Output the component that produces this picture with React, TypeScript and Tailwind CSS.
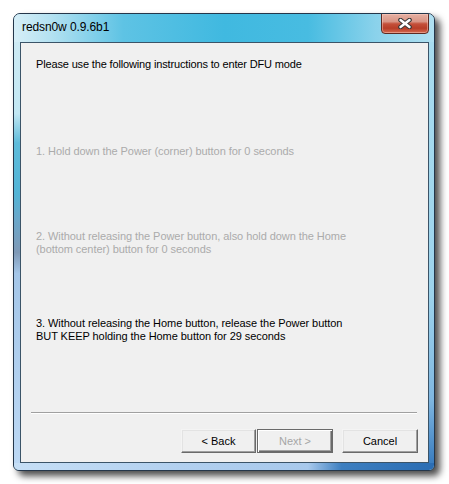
const font = { fontFamily: '"Liberation Sans", Arial, sans-serif' };

const CloseGlyph = () => (
  <svg width="14" height="11" viewBox="0 0 14 11">
    <path d="M2.5 2 L11.5 9 M11.5 2 L2.5 9" stroke="#3a3a3a" strokeWidth="4.6" strokeLinecap="round" fill="none" />
    <path d="M2.5 2 L11.5 9 M11.5 2 L2.5 9" stroke="#ffffff" strokeWidth="2.4" strokeLinecap="round" fill="none" />
  </svg>
);

const App = () => {
  return (
    <div className="min-h-screen w-full bg-white pl-[13px] pt-[13px]" style={font}>
      {/* Window frame */}
      <div className="flex h-[458px] w-[422px] flex-col overflow-hidden rounded-t-[7px] rounded-b-[6px] border border-[#24364a] bg-[#a9d8ee] shadow-[5px_5px_7px_rgba(0,0,0,0.7)]">
        {/* Title bar */}
        <div className="flex h-[28px] shrink-0 items-start justify-between bg-[linear-gradient(90deg,#d6eef7_0%,#b3e1f1_9%,#5ec3e4_26%,#40b9e0_50%,#48bce1_70%,#8ad2eb_86%,#b0e0f1_100%)]">
          <div className="pl-[8px] pt-[5px] text-[12px] leading-[16px] tracking-[-0.1px] text-black">redsn0w 0.9.6b1</div>
          <div className="-mt-px mr-[5px] flex h-[21px] w-[48px] items-center justify-center rounded-b-[4px] border border-[#5e2a22] bg-[linear-gradient(180deg,#e6b0a3_0%,#d99585_40%,#c4503a_52%,#b83e28_75%,#d46a50_100%)] shadow-[inset_0_0_0_1px_rgba(255,210,200,0.45)]">
            <CloseGlyph />
          </div>
        </div>

        {/* Middle row */}
        <div className="flex flex-1">
          <div className="w-[6px] bg-[linear-gradient(180deg,#cdeaf4_0%,#c2e7f3_17%,#5dbbda_24%,#52b4d6_36%,#6aa7ca_42%,#7f99b6_50%,#a4c6e8_55%,#bcd8f4_100%)]" />

          {/* Client area */}
          <div className="flex flex-1 flex-col border border-[#3b5468] bg-[#f0f0f0] text-[11px] leading-[13px] tracking-[-0.06px]">
            <div className="pl-[15px] pt-[15px] tracking-[-0.15px] text-black">Please use the following instructions to enter DFU mode</div>
            <div className="mt-[74px] pl-[15px] text-[#ababab]">1. Hold down the Power (corner) button for 0 seconds</div>
            <div className="mt-[72px] pl-[15px] text-[#ababab]">
              2. Without releasing the Power button, also hold down the Home
              <br />
              (bottom center) button for 0 seconds
            </div>
            <div className="mt-[61px] pl-[15px] text-black">
              3. Without releasing the Home button, release the Power button
              <br />
              BUT KEEP holding the Home button for 29 seconds
            </div>

            {/* Separator */}
            <div className="ml-[10px] mr-[11px] mt-[69px] border-t border-b border-t-[#a0a0a0] border-b-white" />

            {/* Buttons */}
            <div className="mt-[15px] flex justify-end pr-[10px] tracking-normal">
              <div className="flex h-[24px] w-[75px] items-center justify-center border border-t-[#f4f4f4] border-l-[#f4f4f4] border-r-[#6a6a6a] border-b-[#6a6a6a] shadow-[inset_-1px_-1px_0_#a0a0a0,inset_1px_1px_0_#e3e3e3] text-black">
                &lt; Back
              </div>
              <div className="ml-px flex h-[24px] w-[76px] items-center justify-center border border-[#6a6a6a] shadow-[inset_1px_1px_0_#ffffff,inset_-1px_-1px_0_#6a6a6a,inset_-2px_-2px_0_#a0a0a0] text-[#a6a6a6]">
                Next &gt;
              </div>
              <div className="ml-[9px] flex h-[24px] w-[76px] items-center justify-center border border-t-[#f4f4f4] border-l-[#f4f4f4] border-r-[#6a6a6a] border-b-[#6a6a6a] shadow-[inset_-1px_-1px_0_#a0a0a0,inset_1px_1px_0_#e3e3e3] text-black">
                Cancel
              </div>
            </div>
          </div>

          <div className="w-[5px] bg-[linear-gradient(180deg,#a8dcef_0%,#9dd3ec_60%,#7fb6e0_85%,#3a7dbf_100%)]" />
        </div>

        {/* Bottom frame */}
        <div className="h-[7px] shrink-0 bg-[linear-gradient(90deg,#c6dff6_0%,#b2d0ef_40%,#a8c9ec_70%,#3d7fc0_78%,#2b6db3_100%)]" />
      </div>
    </div>
  );
};

export default App;
